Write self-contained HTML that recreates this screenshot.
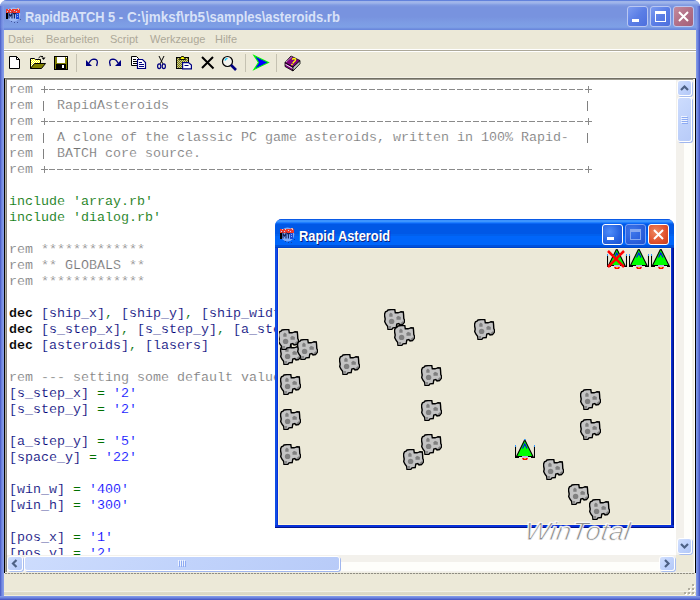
<!DOCTYPE html>
<html><head><meta charset="utf-8">
<style>
*{margin:0;padding:0;box-sizing:border-box}
html,body{width:700px;height:600px;overflow:hidden;background:#fff;position:relative;font-family:"Liberation Sans",sans-serif}
div,svg{position:absolute}
#win{left:0;top:0;width:700px;height:600px;border-radius:7px 7px 0 0;
 background:linear-gradient(to right,#5064cc 0,#5064cc 1px,#6a80da 1px,#6a80da 2px,#7a90e4 2px,#7a90e4 3px,#849be9 3px,#849be9 4px,#7b91e0 4px,#7b91e0 696px,#7f96e8 696px,#7f96e8 697px,#7088df 697px,#7088df 698px,#5f74d6 698px,#5f74d6 699px,#4b5cc6 699px);}
#title{left:0;top:0;width:700px;height:30px;border-radius:7px 7px 0 0;
 background:linear-gradient(to bottom,#6282dc 0,#6282dc 1px,#a0b5ea 1px,#9fb4ea 3px,#8ea8e6 4px,#819be2 5px,#7893df 7px,#7893df 17px,#7c9be3 22px,#7ea0e6 27px,#7898e3 28px,#6a88dc 29px)}
#title .t{left:25px;top:9px;font-weight:bold;font-size:14px;transform:scaleX(0.94);transform-origin:0 0;color:#d8e2f8;white-space:nowrap}
.tb{width:21px;height:21px;border-radius:3px;border:1px solid #b9c7f2;background:linear-gradient(135deg,#7d9cf0 0%,#5b7ee6 50%,#4d6fdd 100%)}
.tbc{background:linear-gradient(135deg,#c48a9c 0%,#b06e86 55%,#a4607a 100%)}
#client{left:4px;top:30px;width:692px;height:566px;background:#ece9d8}
#bottomframe{left:0;top:596px;width:700px;height:4px;background:linear-gradient(to bottom,#7f96e8 0,#7f96e8 1px,#7088df 1px,#7088df 2px,#5f74d6 2px,#5f74d6 3px,#4b5cc6 3px)}
.menu{top:33px;font-size:11px;color:#aca899;white-space:nowrap}
#sep1{left:4px;top:49px;width:692px;height:3px;background:linear-gradient(to bottom,#fff 0,#fff 1px,#aca899 1px,#aca899 2px,#fff 2px)}
#sep2{left:4px;top:77px;width:692px;height:1px;background:#f4f2e8}
.tsep{top:54px;width:1px;height:18px;background:#c5c2b2}
#edout{left:4px;top:78px;width:692px;height:495px;background:#fff;
 border-top:1px solid #716f64;border-left:1px solid #000;border-right:1px solid #000}
#edtop2{left:5px;top:79px;width:690px;height:1px;background:#9d9b8f}
#edleft2{left:5px;top:79px;width:2px;height:494px;background:linear-gradient(to right,#b0ad9f 0,#b0ad9f 1px,#84827a 1px)}
#edright2{left:693px;top:79px;width:2px;height:494px;background:linear-gradient(to right,#f1efe2 0,#f1efe2 1px,#fff 1px)}
#dash{left:5px;top:573px;width:690px;height:1px;background:repeating-linear-gradient(to right,#8f8d82 0,#8f8d82 2px,#d8d5c6 2px,#d8d5c6 3px)}
#code{left:2px;top:2px;-webkit-text-stroke:0.15px #fff;font-family:"Liberation Mono",monospace;font-size:13.333px;line-height:16px;white-space:pre;color:#000080}
#code i{font-style:normal}
#code .r{color:#727272;-webkit-text-stroke:0.2px #fff}
#code .g{color:#007000}
#code .v{color:#000078}
#code .s{color:#0000ff}
#code b{color:#000;font-weight:bold}
.dl{left:42px;width:536px;height:1px;background:repeating-linear-gradient(to right,#8a8a8a 0,#8a8a8a 6px,transparent 6px,transparent 8px)}
.pv{width:1px;height:7px;background:#8a8a8a}.pb{width:1px;height:10px;background:#808080}.ph{width:7px;height:1px;background:#8a8a8a}
#textclip{left:7px;top:80px;width:669px;height:475px;overflow:hidden}
/* scrollbars */
#vsb{left:676px;top:80px;width:17px;height:475px;background:linear-gradient(to right,#f3f1ec 0,#f3f1ec 8px,#fefefb 8px,#fefefb 16px,#f3f1ec 16px)}
#hsb{left:7px;top:555px;width:669px;height:17px;background:linear-gradient(to bottom,#f3f1ec 0,#f3f1ec 7px,#fefefb 7px,#fefefb 16px,#f3f1ec 16px)}
#corner{left:676px;top:555px;width:17px;height:17px;background:#ece9d8}
.sbtn{width:15px;height:16px;border-radius:3px;background:linear-gradient(135deg,#d4e1fd 0%,#c3d5fd 40%,#b3c8f7 100%);border:1px solid #fff;box-shadow:1px 1px 0 #a8bdef}
.thumb{border-radius:3px;background:linear-gradient(135deg,#cddcfd 0%,#c1d3fb 50%,#b8cbf8 100%);border:1px solid #fff;box-shadow:1px 1px 0 #a0b6ee}
#status{left:4px;top:574px;width:692px;height:22px;background:linear-gradient(to bottom,#ece9d8 0,#ece9d8 17px,#f2f0e6 17px,#f2f0e6 18px,#dedbc9 18px,#dad7c4 21px,#f1eedb 21px)}
/* asteroid window */
#aw{left:275px;top:219px;width:399px;height:309px;border-radius:7px 7px 0 0;
 background:linear-gradient(to right,#0831d9 0,#166aee 1px,#0831d9 2px,#0831d9 396px,#0831d9 397px,#00138c 398px)}
#awt{left:0;top:0;width:399px;height:29px;border-radius:7px 7px 0 0;
 background:linear-gradient(to bottom,#0a5ae6 0,#0a5ae6 1px,#3d95ff 1px,#3d95ff 3px,#2080ff 3px,#2080ff 4px,#0a66f5 4px,#0a66f5 5px,#0058e6 5px,#0058e6 15px,#0060ee 15px,#0060ee 17px,#0066fa 17px,#0066fa 26px,#0052dc 26px,#0052dc 28px,#0044c8 28px)}
#awt .t{left:24px;top:9px;font-weight:bold;font-size:14px;transform:scaleX(0.92);transform-origin:0 0;color:#fff;white-space:nowrap;text-shadow:1px 1px 0 #0a1e80}
#awc{left:3px;top:29px;width:393px;height:277px;background:#ece9d8;overflow:hidden;border:1px solid #fff6d8}
#awb{left:0;top:306px;width:399px;height:3px;background:linear-gradient(to bottom,#0831d9,#0831d9 2px,#00138c 2px)}
.atb{width:21px;height:21px;border-radius:3px;border:1px solid #fff;background:radial-gradient(circle at 35% 35%,#4f8df9,#2663e0 60%,#1b50d0)}
.atbc{background:radial-gradient(circle at 35% 35%,#ee8860,#e0502c 60%,#c43e1c)}
</style></head><body>
<svg width="0" height="0" style="position:absolute">
 <defs>
  <filter id="crisp" x="0" y="0" width="100%" height="100%"><feComponentTransfer><feFuncA type="discrete" tableValues="0 1"/></feComponentTransfer></filter>
  <symbol id="ast" viewBox="0 0 21 21">
   <path d="M0.6 5 L1.5 2.8 L3 2.2 L4 1 L7 0.6 L10.8 0.6 L11.3 3.8 L14 3.8 L16 3.2 L17 2.8 L19.3 3 L19.6 6 L19.8 9.5 L20.5 11 L20.4 13.2 L18.5 15.5 L16 16 L14.8 14.5 L12.8 15 L12.2 18.5 L9 18.8 L7.8 20.4 L4 20.4 L3.6 17.2 L2 15.2 L0.7 12.5 L1.2 10 L0.6 7 Z" fill="#c4c4c4" stroke="#000" stroke-width="1.4"/>
   <path d="M5.3 7.8 V5 L6.8 3.4 L8.6 5 V7.8 Z" fill="#808080"/>
   <path d="M12.5 10.8 V8.2 L14 6.8 L16.8 8 V10.8 Z" fill="#808080"/>
   <circle cx="7.6" cy="12.4" r="2.7" fill="#808080"/>
   <rect x="4.3" y="17" width="2.8" height="2.6" fill="#8a8a8a"/>
   <path d="M16 14.5 L19.4 11.8 L19.6 13.2 L17.5 15.3 Z" fill="#808080"/>
  </symbol>
  <symbol id="ship" viewBox="0 0 20 22">
   <path d="M0.5 7 V18.5 H4 M19.5 7 V18.5 H16" fill="none" stroke="#000" stroke-width="1.1"/>
   <path d="M9.75 0.7 L18 17.5 L1.5 17.5 Z" fill="#00ff00" stroke="#000" stroke-width="1.1"/>
   <path d="M7.5 9.5 L9.75 5 L12 9.5" fill="none" stroke="#0000ff" stroke-width="1.1"/>
   <rect x="9" y="0" width="1.5" height="1.2" fill="#3399ff"/>
   <rect x="0" y="6" width="1" height="2" fill="#3399ff"/><rect x="19" y="6" width="1" height="2" fill="#3399ff"/>
   <rect x="7" y="17" width="6" height="1.8" fill="#c8a8e8"/>
   <path d="M7 19 H13 L12 21 H8 Z" fill="#ff0000"/>
   <rect x="9.3" y="19" width="1.4" height="1" fill="#ffff00"/>
  </symbol>
 </defs>
</svg>
<div id="win"></div>
<div id="title"><div class="t" style="left:25px;transform:scaleX(0.915)">RapidBATCH 5 -</div><div class="t" style="left:127px;transform:scaleX(0.963)">C:\jmksf\rb5</div><div class="t" style="left:206px;transform:scaleX(0.93)">\samples\asteroids.rb</div></div>
<svg width="18" height="18" style="left:5px;top:6px">
<ellipse cx="8.5" cy="8.5" rx="6.8" ry="7" fill="#a8c4fa" opacity=".75"/>
<rect x="1" y="3" width="14" height="4" fill="#f03a2a"/>
<g fill="#b8d0ff"><rect x="3" y="3" width="1" height="1"/><rect x="6" y="3" width="1" height="1"/><rect x="9" y="4" width="1" height="1"/><rect x="2" y="5" width="1" height="1"/><rect x="5" y="5" width="1" height="1"/><rect x="11" y="5" width="1" height="1"/><rect x="13" y="3" width="1" height="1"/></g>
<rect x="12" y="2" width="2" height="1" fill="#ffb090"/>
<rect x="1" y="7" width="2" height="6" fill="#000"/>
<path d="M4 12.5 V7.5 L5.5 10 L7 7.5 V12.5" fill="none" stroke="#10205a" stroke-width="1.1"/>
<path d="M7.8 7.6 H11 M9.4 7.6 V12.5" fill="none" stroke="#10205a" stroke-width="1.1"/>
<rect x="11" y="7" width="3" height="6" fill="#1848d8"/>
<rect x="12" y="8" width="1" height="1" fill="#8ab0ff"/><rect x="12" y="10" width="1" height="1" fill="#8ab0ff"/>
<g fill="#1a2a70" opacity=".6"><rect x="6" y="15" width="1" height="1"/><rect x="9" y="16" width="1" height="1"/><rect x="12" y="16" width="1" height="1"/><rect x="15" y="13" width="1" height="1"/></g>
</svg>
<div class="tb" style="left:627px;top:6px"><div style="left:4px;top:12px;width:7px;height:3px;background:#fff"></div></div>
<div class="tb" style="left:650px;top:6px"><div style="left:4px;top:4px;width:11px;height:11px;border:1px solid #fff;border-top:3px solid #fff"></div></div>
<div class="tb tbc" style="left:673px;top:6px"><svg width="19" height="19" style="left:0;top:0"><path d="M5 5 L14 14 M14 5 L5 14" stroke="#fff" stroke-width="2"/></svg></div>
<div id="client"></div>
<div style="left:0;top:6px;width:4px;height:24px;background:linear-gradient(to right,#5064cc 0,#5064cc 1px,#6a80da 1px,#6a80da 2px,#7a90e4 2px,#7a90e4 3px,#849be9 3px);opacity:.7"></div>
<div style="left:696px;top:6px;width:4px;height:24px;background:linear-gradient(to right,#7f96e8 0,#7f96e8 1px,#7088df 1px,#7088df 2px,#5f74d6 2px,#5f74d6 3px,#4b5cc6 3px);opacity:.8"></div>
<div id="bottomframe"></div>
<div class="menu" style="left:8px">Datei</div>
<div class="menu" style="left:46px">Bearbeiten</div>
<div class="menu" style="left:110px">Script</div>
<div class="menu" style="left:150px">Werkzeuge</div>
<div class="menu" style="left:215px">Hilfe</div>
<div id="sep1"></div><div id="sep2"></div>
<div class="tsep" style="left:76px"></div>
<div class="tsep" style="left:245px"></div>
<div class="tsep" style="left:276px"></div>
<svg width="310" height="80" style="left:0;top:0">
<defs>
<pattern id="chk" width="2" height="2" patternUnits="userSpaceOnUse"><rect width="2" height="2" fill="#ffff00"/><rect width="1" height="1" fill="#fff"/><rect x="1" y="1" width="1" height="1" fill="#fff"/></pattern>
<pattern id="chk2" width="2" height="2" patternUnits="userSpaceOnUse"><rect width="2" height="2" fill="#808000"/><rect width="1" height="1" fill="#c0c0a0"/><rect x="1" y="1" width="1" height="1" fill="#c0c0a0"/></pattern>
</defs>
<!-- new -->
<path d="M9.5 56.5 H16.5 L19.5 59.5 V68.5 H9.5 Z" fill="#fff" stroke="#000"/>
<path d="M16.5 56.5 V59.5 H19.5" fill="none" stroke="#000"/>
<!-- open -->
<path d="M30.5 68.5 V58.5 H34.5 L35.5 59.5 H40.5 V63.5" fill="url(#chk)" stroke="#000"/>
<path d="M30.5 68.5 L34.5 63.5 H45.5 L41.5 68.5 Z" fill="#808000" stroke="#000"/>
<path d="M38.5 58 Q40 55.5 43 56.5" fill="none" stroke="#000"/>
<path d="M41.5 57.5 H45.5 L43.5 60 Z" fill="#000"/>
<!-- save -->
<rect x="54" y="56" width="14" height="14" fill="#000"/>
<rect x="55" y="57" width="12" height="12" fill="#808000"/>
<rect x="57" y="57" width="8" height="6" fill="#fff"/>
<rect x="56" y="64" width="10" height="5" fill="#000"/>
<rect x="62" y="65" width="2" height="3" fill="#fff"/>
<rect x="66" y="57" width="1" height="1" fill="#fff"/>
<!-- undo -->
<path d="M86 60 V66 H92 Z" fill="#000080"/>
<path d="M89 63 Q91 59.2 94 59.2 Q97.4 59.4 97.4 62.5 L96.6 66" fill="none" stroke="#000080" stroke-width="1.3"/>
<!-- redo -->
<path d="M121 60 V66 H115 Z" fill="#000080"/>
<path d="M118 63 Q116 59.2 113 59.2 Q109.6 59.4 109.6 62.5 L110.4 66" fill="none" stroke="#000080" stroke-width="1.3"/>
<!-- copy -->
<path d="M131.5 56.5 H136.5 L138.5 58.5 V65.5 H131.5 Z" fill="#fff" stroke="#000"/>
<path d="M133 59.5 H136 M133 61.5 H137 M133 63.5 H137" stroke="#000"/>
<path d="M137.5 59.5 H142.5 L145.5 62.5 V68.5 H137.5 Z" fill="#fff" stroke="#000080" stroke-width="1.2"/>
<path d="M139 62.5 H142 M139 64.5 H144 M139 66.5 H144" stroke="#000080"/>
<!-- cut -->
<path d="M159 56 L162.8 63.8 M164 56 L160.2 63.8" stroke="#000" stroke-width="1"/>
<ellipse cx="159.2" cy="66.3" rx="1.6" ry="2.4" fill="none" stroke="#000080" stroke-width="1.2"/>
<ellipse cx="163.8" cy="66.3" rx="1.6" ry="2.4" fill="none" stroke="#000080" stroke-width="1.2"/>
<!-- paste -->
<rect x="176.5" y="57.5" width="12" height="11" fill="url(#chk2)" stroke="#000"/>
<path d="M179.5 59.5 L181.5 56.5 H183.5 L185.5 59.5 Z" fill="#ffff00" stroke="#000" stroke-width="0.9"/>
<path d="M182.6 62.6 H188.5 L191.4 65 V68.9 H182.6 Z" fill="#fff" stroke="#000080" stroke-width="1.2"/>
<path d="M184.5 65.5 H188.5" stroke="#000080"/>
<!-- delete -->
<path d="M202 57 L213.5 68.5 M213 57 L202 68" stroke="#000" stroke-width="2"/>
<!-- find -->
<circle cx="227.5" cy="61.5" r="5" fill="#f4f4ee" stroke="#000" stroke-width="1.2"/>
<path d="M225 60.5 Q225.5 58.5 227.5 58.3" fill="none" stroke="#00c8ff" stroke-width="1.2"/>
<path d="M231 65 L236 70" stroke="#000080" stroke-width="2.6"/>
<!-- run -->
<path d="M254 55.5 L268.5 62.5 L254 69.5 L258.5 62.5 Z" fill="#0000ff" stroke="#00ff00" stroke-width="1.1"/>
<!-- help -->
<path d="M285 62.5 L293 67 V71 L285 66.5 Z" fill="#800080" stroke="#000" stroke-width="0.8"/>
<path d="M285.5 64.3 L293 68.6" stroke="#fff" stroke-width="0.9"/>
<path d="M293 67 L300 60.5 V63.8 L293 71 Z" fill="#c0c0c0" stroke="#000" stroke-width="0.8"/>
<path d="M291 56 L300 60.5 L293 67 L285 62.5 Z" fill="#800080" stroke="#000" stroke-width="0.8"/>
<path d="M286.3 61.8 L291.6 57" stroke="#fff" stroke-width="1" stroke-dasharray="1 0.6"/>
<path d="M292.2 59.6 Q293.5 57.8 295.6 59.2 Q295.8 60.8 293.6 62.2 L292.8 63.2" fill="none" stroke="#ffff00" stroke-width="1.4"/>
<rect x="291.2" y="63.8" width="1.6" height="1.4" fill="#ffff00"/>
</svg>
<div id="edout"></div>
<div id="edtop2"></div>
<div id="edleft2"></div>
<div id="edright2"></div>
<div id="textclip"><div id="code"><i class="r">rem                                                                      </i>
<i class="r">rem   RapidAsteroids                                                     </i>
<i class="r">rem                                                                      </i>
<i class="r">rem   A clone of the classic PC game asteroids, written in 100% Rapid-   </i>
<i class="r">rem   BATCH core source.</i>
<i class="r">rem                                                                      </i>

<i class="g">include 'array.rb'</i>
<i class="g">include 'dialog.rb'</i>

<i class="r">rem *************</i>
<i class="r">rem ** GLOBALS **</i>
<i class="r">rem *************</i>

<b>dec</b> <i class="v">[ship_x]</i><i class="g">, </i><i class="v">[ship_y]</i><i class="g">, </i><i class="v">[ship_width]</i>
<b>dec</b> <i class="v">[s_step_x]</i><i class="g">, </i><i class="v">[s_step_y]</i><i class="g">, </i><i class="v">[a_step_y]</i>
<b>dec</b> <i class="v">[asteroids]</i><i class="g">, </i><i class="v">[lasers]</i>

<i class="r">rem --- setting some default values</i>
<i class="v">[s_step_x]</i> <i class="g">=</i> <i class="s">'2'</i>
<i class="v">[s_step_y]</i> <i class="g">=</i> <i class="s">'2'</i>

<i class="v">[a_step_y]</i> <i class="g">=</i> <i class="s">'5'</i>
<i class="v">[space_y]</i> <i class="g">=</i> <i class="s">'22'</i>

<i class="v">[win_w]</i> <i class="g">=</i> <i class="s">'400'</i>
<i class="v">[win_h]</i> <i class="g">=</i> <i class="s">'300'</i>

<i class="v">[pos_x]</i> <i class="g">=</i> <i class="s">'1'</i>
<i class="v">[pos_y]</i> <i class="g">=</i> <i class="s">'2'</i></div><div class="dl" style="top:9px"></div><div class="pv" style="left:37px;top:6px"></div><div class="ph" style="left:34px;top:9px"></div><div class="pv" style="left:581px;top:6px"></div><div class="ph" style="left:578px;top:9px"></div><div class="dl" style="top:41px"></div><div class="pv" style="left:37px;top:38px"></div><div class="ph" style="left:34px;top:41px"></div><div class="pv" style="left:581px;top:38px"></div><div class="ph" style="left:578px;top:41px"></div><div class="dl" style="top:89px"></div><div class="pv" style="left:37px;top:86px"></div><div class="ph" style="left:34px;top:89px"></div><div class="pv" style="left:581px;top:86px"></div><div class="ph" style="left:578px;top:89px"></div><div class="pb" style="left:36px;top:21px"></div><div class="pb" style="left:36px;top:53px"></div><div class="pb" style="left:36px;top:69px"></div><div class="pb" style="left:580px;top:21px"></div><div class="pb" style="left:580px;top:53px"></div></div>
<div id="vsb"></div>
<div id="hsb"></div>
<div id="corner"></div>
<div class="sbtn" style="left:677px;top:80px"><svg width="13" height="14" style="left:0;top:0"><path d="M3 9 L6.5 5.5 L10 9" fill="none" stroke="#4d6185" stroke-width="2.2"/></svg></div>
<div class="thumb" style="left:677px;top:97px;width:15px;height:45px"><svg width="13" height="43" style="left:0;top:0"><path d="M3 18.5 H9 M3 20.5 H9 M3 22.5 H9 M3 24.5 H9" stroke="#eef3fe" stroke-width="1"/><path d="M4 19.5 H10 M4 21.5 H10 M4 23.5 H10 M4 25.5 H10" stroke="#8caaf2" stroke-width="1"/></svg></div>
<div class="sbtn" style="left:677px;top:538px"><svg width="13" height="14" style="left:0;top:0"><path d="M3 5 L6.5 8.5 L10 5" fill="none" stroke="#4d6185" stroke-width="2.2"/></svg></div>
<div class="sbtn" style="left:7px;top:556px;width:16px;height:15px"><svg width="14" height="13" style="left:0;top:0"><path d="M8.5 3 L5 6.5 L8.5 10" fill="none" stroke="#4d6185" stroke-width="2.2"/></svg></div>
<div class="thumb" style="left:24px;top:556px;width:316px;height:15px"><svg width="314" height="13" style="left:0;top:0"><path d="M153.5 3 V9 M155.5 3 V9 M157.5 3 V9 M159.5 3 V9" stroke="#eef3fe" stroke-width="1"/><path d="M154.5 4 V10 M156.5 4 V10 M158.5 4 V10 M160.5 4 V10" stroke="#8caaf2" stroke-width="1"/></svg></div>
<div class="sbtn" style="left:659px;top:556px;width:16px;height:15px"><svg width="14" height="13" style="left:0;top:0"><path d="M5 3 L8.5 6.5 L5 10" fill="none" stroke="#4d6185" stroke-width="2.2"/></svg></div>
<div id="dash"></div><div style="left:5px;top:572px;width:690px;height:1px;background:#f1efe4"></div>
<div id="status"></div>
<svg width="12" height="12" style="left:684px;top:584px"><g fill="#fff"><rect x="9" y="1" width="2" height="2"/><rect x="5" y="5" width="2" height="2"/><rect x="9" y="5" width="2" height="2"/><rect x="1" y="9" width="2" height="2"/><rect x="5" y="9" width="2" height="2"/><rect x="9" y="9" width="2" height="2"/></g><g fill="#b0ad9f"><rect x="8" y="0" width="2" height="2"/><rect x="4" y="4" width="2" height="2"/><rect x="8" y="4" width="2" height="2"/><rect x="0" y="8" width="2" height="2"/><rect x="4" y="8" width="2" height="2"/><rect x="8" y="8" width="2" height="2"/></g></svg>
<div id="aw">
 <div id="awt"><div class="t">Rapid Asteroid</div></div>
 <svg width="18" height="18" style="left:4px;top:7px">
<ellipse cx="8.5" cy="8.5" rx="6.8" ry="7" fill="#a8c4fa" opacity=".75"/>
<rect x="1" y="3" width="14" height="4" fill="#f03a2a"/>
<g fill="#b8d0ff"><rect x="3" y="3" width="1" height="1"/><rect x="6" y="3" width="1" height="1"/><rect x="9" y="4" width="1" height="1"/><rect x="2" y="5" width="1" height="1"/><rect x="5" y="5" width="1" height="1"/><rect x="11" y="5" width="1" height="1"/><rect x="13" y="3" width="1" height="1"/></g>
<rect x="12" y="2" width="2" height="1" fill="#ffb090"/>
<rect x="1" y="7" width="2" height="6" fill="#000"/>
<path d="M4 12.5 V7.5 L5.5 10 L7 7.5 V12.5" fill="none" stroke="#10205a" stroke-width="1.1"/>
<path d="M7.8 7.6 H11 M9.4 7.6 V12.5" fill="none" stroke="#10205a" stroke-width="1.1"/>
<rect x="11" y="7" width="3" height="6" fill="#1848d8"/>
<rect x="12" y="8" width="1" height="1" fill="#8ab0ff"/><rect x="12" y="10" width="1" height="1" fill="#8ab0ff"/>
<g fill="#1a2a70" opacity=".6"><rect x="6" y="15" width="1" height="1"/><rect x="9" y="16" width="1" height="1"/><rect x="12" y="16" width="1" height="1"/><rect x="15" y="13" width="1" height="1"/></g>
</svg>
 <div class="atb" style="left:327px;top:5px"><div style="left:4px;top:12px;width:7px;height:3px;background:#fff"></div></div>
 <div class="atb" style="left:350px;top:5px;border-color:#7aa2f7;background:radial-gradient(circle at 35% 35%,#3f78ec,#2a5fdc 60%,#2352cc)"><div style="left:4px;top:4px;width:11px;height:11px;border:1px solid #86a8f0;border-top:3px solid #86a8f0"></div></div>
 <div class="atb atbc" style="left:373px;top:5px"><svg width="19" height="19" style="left:0;top:0"><path d="M5 5 L14 14 M14 5 L5 14" stroke="#fff" stroke-width="2"/></svg></div>
 <div id="awc"><svg class="ast" style="left:1px;top:95px" width="21" height="21"><use href="#ast"/></svg><svg class="ast" style="left:-1px;top:80px" width="21" height="21"><use href="#ast"/></svg><svg class="ast" style="left:18px;top:90px" width="21" height="21"><use href="#ast"/></svg><svg class="ast" style="left:60px;top:105px" width="21" height="21"><use href="#ast"/></svg><svg class="ast" style="left:115px;top:76px" width="21" height="21"><use href="#ast"/></svg><svg class="ast" style="left:105px;top:60px" width="21" height="21"><use href="#ast"/></svg><svg class="ast" style="left:1px;top:125px" width="21" height="21"><use href="#ast"/></svg><svg class="ast" style="left:1px;top:160px" width="21" height="21"><use href="#ast"/></svg><svg class="ast" style="left:1px;top:195px" width="21" height="21"><use href="#ast"/></svg><svg class="ast" style="left:142px;top:116px" width="21" height="21"><use href="#ast"/></svg><svg class="ast" style="left:142px;top:151px" width="21" height="21"><use href="#ast"/></svg><svg class="ast" style="left:142px;top:185px" width="21" height="21"><use href="#ast"/></svg><svg class="ast" style="left:124px;top:200px" width="21" height="21"><use href="#ast"/></svg><svg class="ast" style="left:195px;top:70px" width="21" height="21"><use href="#ast"/></svg><svg class="ast" style="left:301px;top:140px" width="21" height="21"><use href="#ast"/></svg><svg class="ast" style="left:301px;top:170px" width="21" height="21"><use href="#ast"/></svg><svg class="ast" style="left:264px;top:210px" width="21" height="21"><use href="#ast"/></svg><svg class="ast" style="left:289px;top:235px" width="21" height="21"><use href="#ast"/></svg><svg class="ast" style="left:310px;top:250px" width="21" height="21"><use href="#ast"/></svg><svg style="left:236px;top:190px" width="20" height="22"><use href="#ship"/></svg><svg style="left:328px;top:-1px" width="20" height="22"><use href="#ship"/></svg><svg style="left:350px;top:-1px" width="20" height="22"><use href="#ship"/></svg><svg style="left:372px;top:-1px" width="20" height="22"><use href="#ship"/></svg><svg style="left:328px;top:0px" width="20" height="20"><path d="M1 2 L17 18 M17 2 L1 18" stroke="#ff0000" stroke-width="2.5"/></svg></div>
 <div id="awb"></div>
</div>
<div id="wm" style="left:527px;top:517px;font-family:'Liberation Sans',sans-serif;font-style:italic;font-size:26.5px;letter-spacing:0.5px;color:#8c8c8c;-webkit-text-stroke:0.9px rgba(255,255,255,.9);text-shadow:-1px -1px 0 rgba(255,255,255,.8);white-space:nowrap;transform:scaleY(0.95) skewX(-8deg);transform-origin:0 0">WinTotal</div>
</body></html>
